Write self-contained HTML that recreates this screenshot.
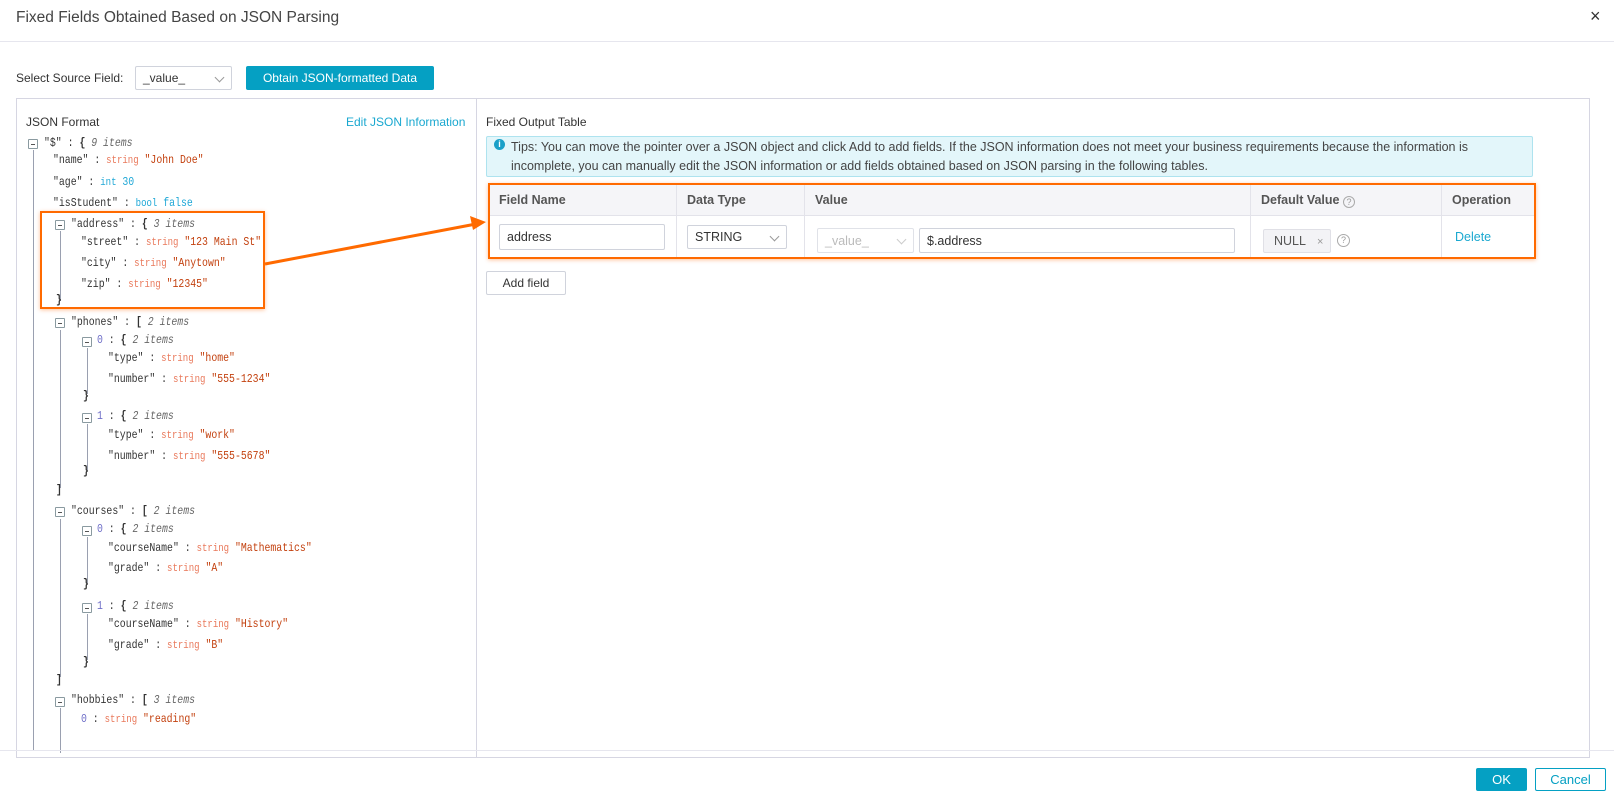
<!DOCTYPE html>
<html><head><meta charset="utf-8"><style>
*{box-sizing:border-box;margin:0;padding:0}
body{width:1614px;height:801px;background:#fff;font-family:"Liberation Sans",sans-serif;color:#333;position:relative;overflow:hidden;font-size:12px}
.a{position:absolute}
.t{position:absolute;font-family:"Liberation Mono",monospace;font-size:12px;line-height:16px;white-space:nowrap;color:#333;transform:scaleX(0.82);transform-origin:0 0}
.s{color:#e9785a;font-size:11px}
.v{color:#c3410f}
.n{color:#1ea7d6}
.i{font-style:italic;color:#666}
.k{color:#6f6fc8}
.tg{position:absolute;width:10px;height:10px;border:1px solid #8a9aa0;border-radius:1px;background:#fff}
.tg:after{content:"";position:absolute;left:2px;right:2px;top:4px;height:1px;background:#555}
.vl{position:absolute;width:1px;background:#9aa0b0}
.hd{position:absolute;top:185px;height:31px;line-height:31px;font-weight:bold;font-size:12.5px;color:#555;padding-left:10px;border-right:1px solid #e3e3ea}
.bd{position:absolute;top:216px;height:41px;border-right:1px solid #e3e3ea}
.inp{position:absolute;border:1px solid #d0d3dc;border-radius:2px;background:#fff;font-size:12.5px;color:#333;padding-left:7px;line-height:24px;height:26px}
.chev{position:absolute;right:8px;top:7px;width:7px;height:7px;border-right:1.5px solid #999;border-bottom:1.5px solid #999;transform:rotate(45deg)}
</style></head><body>
<div class="a" style="left:16px;top:9px;font-size:15.5px;color:#444">Fixed Fields Obtained Based on JSON Parsing</div>
<div class="a" style="left:1590px;top:6px;font-size:18px;color:#333">×</div>
<div class="a" style="left:0;top:41px;width:1614px;height:1px;background:#e6e6ee"></div>

<div class="a" style="left:16px;top:71px;font-size:12px;color:#333">Select Source Field:</div>
<div class="inp" style="left:135px;top:66px;width:97px;height:24px;line-height:22px;font-size:12px">_value_<span class="chev"></span></div>
<div class="a" style="left:246px;top:66px;width:188px;height:24px;background:#05a0c3;border-radius:2px;color:#fff;font-size:12px;line-height:24px;text-align:center">Obtain JSON-formatted Data</div>

<div class="a" style="left:16px;top:98px;width:1574px;height:660px;border:1px solid #d6d6e2"></div>
<div class="a" style="left:476px;top:98px;width:1px;height:660px;background:#d6d6e2"></div>
<div class="a" style="left:26px;top:115px;font-size:12px;color:#333">JSON Format</div>
<div class="a" style="left:346px;top:115px;font-size:12px;color:#1aa8d0">Edit JSON Information</div>

<div class="vl" style="left:33px;top:150px;height:600px"></div>
<div class="vl" style="left:60px;top:231px;height:70px"></div>
<div class="vl" style="left:60px;top:330px;height:158px"></div>
<div class="vl" style="left:87px;top:348px;height:46px"></div>
<div class="vl" style="left:87px;top:424px;height:46px"></div>
<div class="vl" style="left:60px;top:519px;height:158px"></div>
<div class="vl" style="left:87px;top:537px;height:46px"></div>
<div class="vl" style="left:87px;top:614px;height:46px"></div>
<div class="vl" style="left:60px;top:708px;height:45px"></div>

<div class="tg" style="left:28px;top:139px"></div>
<div class="t" style="left:44px;top:135px">"$" : <b>{</b>  <span class="i">9 items</span></div>
<div class="t" style="left:53px;top:152px">"name" : <span class="s">string</span> <span class="v">"John Doe"</span></div>
<div class="t" style="left:53px;top:174px">"age" : <span class="n" style="font-size:11px">int</span> <span class="n">30</span></div>
<div class="t" style="left:53px;top:195px">"isStudent" : <span class="n" style="font-size:11px">bool</span> <span class="n">false</span></div>
<div class="tg" style="left:55px;top:220px"></div>
<div class="t" style="left:71px;top:216px">"address" : <b>{</b>  <span class="i">3 items</span></div>
<div class="t" style="left:81px;top:234px">"street" : <span class="s">string</span> <span class="v">"123 Main St"</span></div>
<div class="t" style="left:81px;top:255px">"city" : <span class="s">string</span> <span class="v">"Anytown"</span></div>
<div class="t" style="left:81px;top:276px">"zip" : <span class="s">string</span> <span class="v">"12345"</span></div>
<div class="t" style="left:56px;top:292px"><b>}</b></div>
<div class="tg" style="left:55px;top:318px"></div>
<div class="t" style="left:71px;top:314px">"phones" : <b>[</b>  <span class="i">2 items</span></div>
<div class="tg" style="left:82px;top:337px"></div>
<div class="t" style="left:97px;top:332px"><span class="k">0</span> : <b>{</b>  <span class="i">2 items</span></div>
<div class="t" style="left:108px;top:350px">"type" : <span class="s">string</span> <span class="v">"home"</span></div>
<div class="t" style="left:108px;top:371px">"number" : <span class="s">string</span> <span class="v">"555-1234"</span></div>
<div class="t" style="left:83px;top:388px"><b>}</b></div>
<div class="tg" style="left:82px;top:413px"></div>
<div class="t" style="left:97px;top:408px"><span class="k">1</span> : <b>{</b>  <span class="i">2 items</span></div>
<div class="t" style="left:108px;top:427px">"type" : <span class="s">string</span> <span class="v">"work"</span></div>
<div class="t" style="left:108px;top:448px">"number" : <span class="s">string</span> <span class="v">"555-5678"</span></div>
<div class="t" style="left:83px;top:463px"><b>}</b></div>
<div class="t" style="left:56px;top:482px"><b>]</b></div>
<div class="tg" style="left:55px;top:507px"></div>
<div class="t" style="left:71px;top:503px">"courses" : <b>[</b>  <span class="i">2 items</span></div>
<div class="tg" style="left:82px;top:526px"></div>
<div class="t" style="left:97px;top:521px"><span class="k">0</span> : <b>{</b>  <span class="i">2 items</span></div>
<div class="t" style="left:108px;top:540px">"courseName" : <span class="s">string</span> <span class="v">"Mathematics"</span></div>
<div class="t" style="left:108px;top:560px">"grade" : <span class="s">string</span> <span class="v">"A"</span></div>
<div class="t" style="left:83px;top:576px"><b>}</b></div>
<div class="tg" style="left:82px;top:603px"></div>
<div class="t" style="left:97px;top:598px"><span class="k">1</span> : <b>{</b>  <span class="i">2 items</span></div>
<div class="t" style="left:108px;top:616px">"courseName" : <span class="s">string</span> <span class="v">"History"</span></div>
<div class="t" style="left:108px;top:637px">"grade" : <span class="s">string</span> <span class="v">"B"</span></div>
<div class="t" style="left:83px;top:654px"><b>}</b></div>
<div class="t" style="left:56px;top:672px"><b>]</b></div>
<div class="tg" style="left:55px;top:697px"></div>
<div class="t" style="left:71px;top:692px">"hobbies" : <b>[</b>  <span class="i">3 items</span></div>
<div class="t" style="left:81px;top:711px"><span class="k">0</span> : <span class="s">string</span> <span class="v">"reading"</span></div>

<div class="a" style="left:486px;top:115px;font-size:12px;color:#333">Fixed Output Table</div>
<div class="a" style="left:486px;top:136px;width:1047px;height:41px;background:#e3f6fa;border:1px solid #aee3ef;border-radius:2px"></div>
<div class="a" style="left:494px;top:139px;width:11px;height:11px;border-radius:50%;background:#1aa0c8;color:#fff;font-size:9px;line-height:11px;text-align:center;font-weight:bold">i</div>
<div class="a" style="left:511px;top:138px;width:1010px;font-size:12.5px;line-height:19px;color:#444">Tips: You can move the pointer over a JSON object and click Add to add fields. If the JSON information does not meet your business requirements because the information is incomplete, you can manually edit the JSON information or add fields obtained based on JSON parsing in the following tables.</div>

<div class="a" style="left:489px;top:185px;width:1045px;height:31px;background:#f5f5f8;border-bottom:1px solid #e3e3ea"></div>
<div class="hd" style="left:489px;width:188px">Field Name</div>
<div class="hd" style="left:677px;width:128px">Data Type</div>
<div class="hd" style="left:805px;width:446px">Value</div>
<div class="hd" style="left:1251px;width:191px">Default Value <span style="display:inline-block;width:12px;height:12px;border:1px solid #aaa;border-radius:50%;font-size:9px;line-height:10px;text-align:center;color:#999;font-weight:normal;vertical-align:-1px">?</span></div>
<div class="hd" style="left:1442px;width:92px;border-right:none">Operation</div>
<div class="bd" style="left:489px;width:188px"></div>
<div class="bd" style="left:677px;width:128px"></div>
<div class="bd" style="left:805px;width:446px"></div>
<div class="bd" style="left:1251px;width:191px"></div>
<div class="inp" style="left:499px;top:224px;width:166px">address</div>
<div class="inp" style="left:687px;top:225px;width:100px;height:24px;line-height:22px">STRING<span class="chev"></span></div>
<div class="inp" style="left:817px;top:228px;width:97px;height:25px;color:#bbb;border-color:#e0e2e8">_value_<span class="chev" style="border-color:#ccc"></span></div>
<div class="inp" style="left:919px;top:228px;width:316px;height:25px">$.address</div>
<div class="a" style="left:1263px;top:229px;width:68px;height:24px;background:#f3f3f6;border:1px solid #e0e0e6;border-radius:2px;font-size:12.5px;line-height:22px;padding-left:10px;color:#555">NULL <span style="margin-left:8px;color:#999;font-size:11px">×</span></div>
<div class="a" style="left:1337px;top:234px;width:13px;height:13px;border:1px solid #aaa;border-radius:50%;font-size:9px;line-height:11px;text-align:center;color:#999">?</div>
<div class="a" style="left:1455px;top:230px;font-size:12.5px;color:#1aa8d0">Delete</div>

<div class="a" style="left:486px;top:271px;width:80px;height:24px;border:1px solid #d0d3dc;border-radius:2px;font-size:12px;line-height:22px;text-align:center;color:#333">Add field</div>

<div class="a" style="left:40px;top:211px;width:225px;height:98px;border:2.5px solid #ff6a00;box-shadow:0 1px 4px rgba(255,106,0,.4)"></div>
<div class="a" style="left:488px;top:183px;width:1048px;height:76px;border:2.5px solid #ff6a00;box-shadow:0 1px 4px rgba(255,106,0,.4)"></div>
<svg class="a" style="left:0;top:0" width="1614" height="801"><line x1="265" y1="264" x2="476" y2="224" stroke="#ff6a00" stroke-width="3"/><polygon points="486,222 470,216 473,230" fill="#ff6a00"/></svg>

<div class="a" style="left:0;top:750px;width:1614px;height:1px;background:#e6e6ee"></div>
<div class="a" style="left:1476px;top:768px;width:51px;height:23px;background:#05a0c3;border-radius:2px;color:#fff;font-size:13px;line-height:23px;text-align:center">OK</div>
<div class="a" style="left:1535px;top:768px;width:71px;height:23px;border:1px solid #05a0c3;border-radius:2px;color:#05a0c3;font-size:13px;line-height:21px;text-align:center">Cancel</div>
</body></html>
